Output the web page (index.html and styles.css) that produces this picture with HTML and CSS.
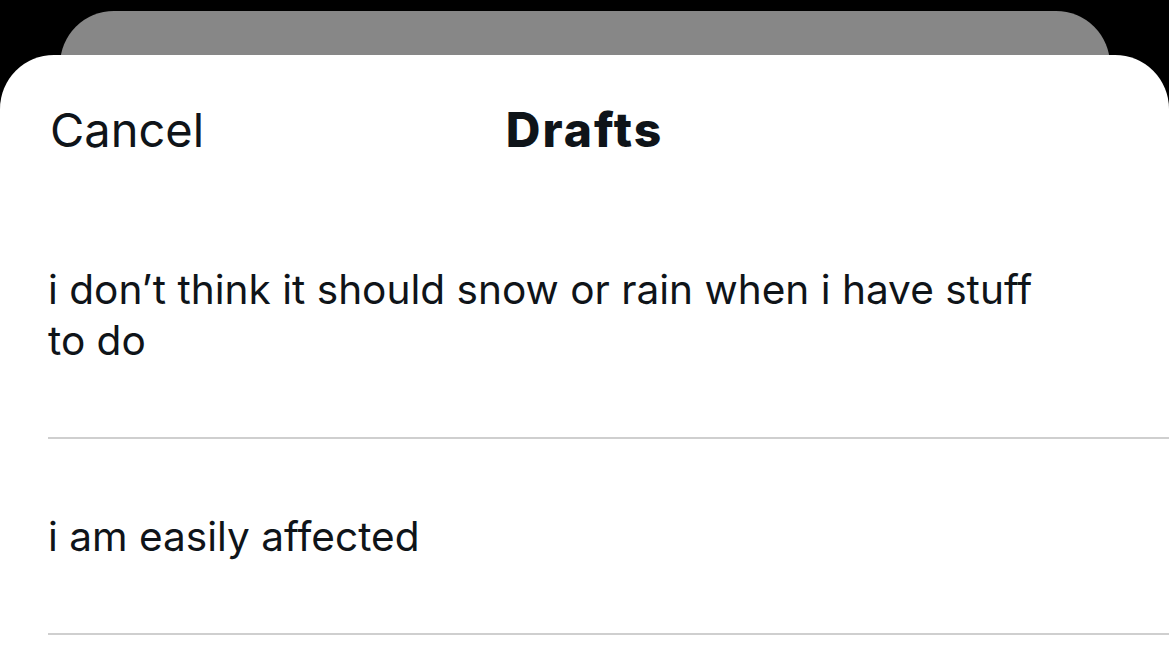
FILE: index.html
```html
<!DOCTYPE html>
<html>
<head>
<meta charset="utf-8">
<link rel="stylesheet" href="styles.css">
</head>
<body>
<div class="backcard"></div>
<div class="sheet">
  <div class="header">
    <span class="cancel">Cancel</span>
    <span class="title">Drafts</span>
  </div>
  <div class="item">i don’t think it should snow or rain when i have stuff to do</div>
  <div class="item">i am easily affected</div>
</div>
</body>
</html>
```
FILE: styles.css
```css
html, body {
  margin: 0;
  padding: 0;
  background: #000;
  height: 100%;
  overflow: hidden;
}
body {
  font-family: Inter, "Noto Sans", sans-serif;
  color: #0f1419;
}
.backcard {
  margin: 11px 59px 0 60px;
  height: 100px;
  background: #878787;
  border-radius: 54px 54px 0 0;
}
.sheet {
  position: relative;
  margin-top: -56px;
  background: #fff;
  border-radius: 54px 54px 0 0;
  height: 613px;
  overflow: hidden;
}
.header {
  position: relative;
  height: 137px;
  box-sizing: border-box;
  padding: 47px 50px 0;
}
.cancel {
  font-size: 47px;
  line-height: 56px;
}
.title {
  position: absolute;
  left: 0;
  right: 0;
  top: 47px;
  text-align: center;
  font-size: 48px;
  line-height: 56px;
  font-weight: 800;
  letter-spacing: 2px;
  pointer-events: none;
}
.item {
  margin-left: 48px;
  padding: 72px 110px 71px 0;
  font-size: 40.6px;
  line-height: 51px;
  border-bottom: 2px solid #cfcfcf;
}
```
